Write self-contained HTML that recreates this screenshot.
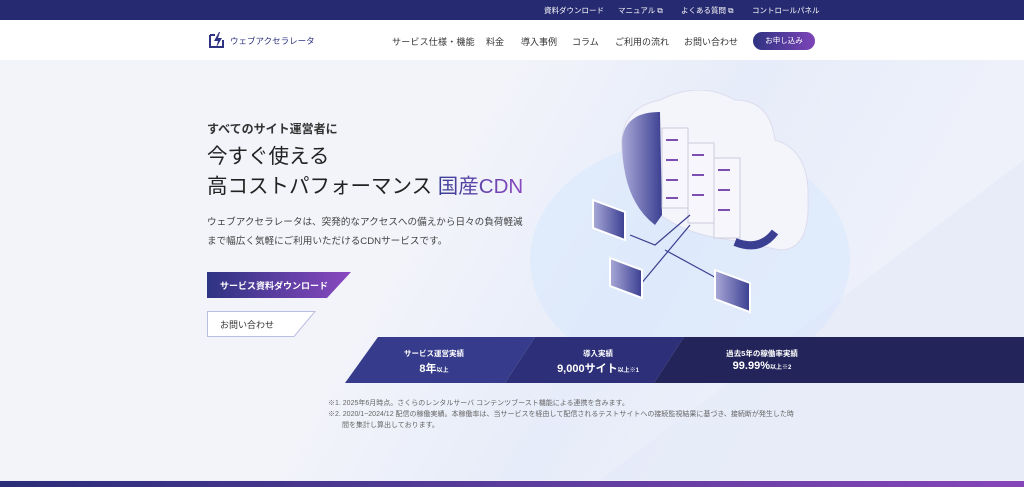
<!DOCTYPE html>
<html><head><meta charset="utf-8"><style>
*{margin:0;padding:0;box-sizing:border-box}
body{width:1024px;height:487px;overflow:hidden;font-family:"Liberation Sans","Noto Sans CJK JP",sans-serif;background:#eff1f9;position:relative;color:#222}
.top{position:absolute;top:0;left:0;width:1024px;height:20px;background:#262a70;color:#fff;font-size:7.5px}
.top span{position:absolute;top:5px}
.nav{position:absolute;top:20px;left:0;width:1024px;height:40px;background:#fff}
.nav .m{position:absolute;top:15px;font-size:9px;color:#333}
.btn1{position:absolute;left:753px;top:32px;width:62px;height:18px;border-radius:9px;background:linear-gradient(90deg,#2e3382,#7d44b8);color:#fff;font-size:7.5px;text-align:center;line-height:18px}
.hero{position:absolute;top:60px;left:0;width:1024px;height:420px;background:linear-gradient(120deg,#f3f4fa 40%,#e6ecf9 60%,#eef1fa 80%)}
.t{position:absolute;left:207px}
.st{position:absolute;color:#fff;text-align:center;font-weight:bold}
.foot{position:absolute;left:328px;font-size:7px;color:#666}
.bottom{position:absolute;left:0;top:481px;width:1024px;height:6px;background:linear-gradient(90deg,#2a2d78,#5a3c9c 50%,#8545b8)}
</style></head><body>
<div class="top"><span style="left:544px">資料ダウンロード</span><span style="left:618px">マニュアル ⧉</span><span style="left:681px">よくある質問 ⧉</span><span style="left:752px">コントロールパネル</span></div>
<div class="nav">
<svg style="position:absolute;left:208px;top:11px" width="18" height="18" viewBox="0 0 18 18"><path d="M2 4h5M2 4v12h13V9" stroke="#2e3382" stroke-width="2" fill="none"/><path d="M11 1L6 10h4l-2 7 6-10h-4l2-6z" fill="#2e3382"/></svg>
<span class="m" style="left:230px;font-size:8.5px;color:#2e3382">ウェブアクセラレータ</span>
<span class="m" style="left:392px;letter-spacing:.2px">サービス仕様・機能</span><span class="m" style="left:486px">料金</span><span class="m" style="left:521px">導入事例</span><span class="m" style="left:572px">コラム</span><span class="m" style="left:615px">ご利用の流れ</span><span class="m" style="left:684px">お問い合わせ</span>
</div>
<div class="btn1">お申し込み</div>
<div class="hero">
<svg style="position:absolute;left:0;top:0" width="1024" height="420"><polygon points="600,420 1024,100 1024,420" fill="#e4eaf8" opacity=".6"/><ellipse cx="690" cy="200" rx="160" ry="120" fill="#d9e8fb" opacity=".6"/></svg>
<svg style="position:absolute;left:570px;top:30px" width="240" height="230" viewBox="560 90 240 230">
<defs><linearGradient id="g" x1="0" x2="1"><stop offset="0" stop-color="#a9a9d8"/><stop offset="1" stop-color="#3b3f91"/></linearGradient></defs>
<path d="M615 170 Q600 110 650 100 Q690 80 725 100 Q760 100 765 140 Q800 150 798 200 Q800 250 770 250 L720 240 Q640 230 615 170Z" fill="#f4f4fb" stroke="#dcdcee"/>
<path d="M612 140 Q615 112 650 112 L652 215 L645 225 Q612 200 612 140Z" fill="url(#g)"/>
<g fill="#f6f6fc" stroke="#ccd"><rect x="652" y="128" width="26" height="80"/><rect x="678" y="143" width="26" height="80"/><rect x="704" y="158" width="26" height="80"/></g>
<g stroke="#7a4fb0" stroke-width="2"><path d="M656 140h12M656 160h12M656 180h12M656 198h12M682 155h12M682 175h12M682 195h12M708 170h12M708 190h12M708 210h12"/></g>
<path d="M725 242 Q750 252 765 232" fill="none" stroke="#3b3f91" stroke-width="8"/>
<g stroke="#3b3f91" stroke-width="1.2" fill="none"><path d="M620 235 L645 245 L680 215M630 285 L680 225M655 250 L710 280"/></g>
<g fill="url(#g)" stroke="#fff" stroke-width="2"><path d="M583 200 L615 212 L615 240 L583 228Z"/><path d="M600 258 L632 270 L632 298 L600 286Z"/><path d="M705 270 L740 283 L740 312 L705 299Z"/></g>
</svg>
<div class="t" style="top:60px;font-size:12px;font-weight:bold;color:#333">すべてのサイト運営者に</div>
<div class="t" style="top:82px;font-size:20.5px;color:#222;line-height:30px">今すぐ使える<br>高コストパフォーマンス <span style="background:linear-gradient(90deg,#3a3f96,#8a49c0);-webkit-background-clip:text;color:transparent">国産CDN</span></div>
<div class="t" style="top:153px;font-size:9.6px;color:#444;line-height:19px">ウェブアクセラレータは、突発的なアクセスへの備えから日々の負荷軽減<br>まで幅広く気軽にご利用いただけるCDNサービスです。</div>
<svg style="position:absolute;left:207px;top:212px" width="145" height="26"><defs><linearGradient id="b" x1="0" x2="1"><stop offset="0" stop-color="#2e3382"/><stop offset="1" stop-color="#8a49c0"/></linearGradient></defs><polygon points="0,0 144,0 120,26 0,26" fill="url(#b)"/><text x="13" y="17" fill="#fff" font-size="9" font-weight="bold" font-family="Liberation Sans,Noto Sans CJK JP,sans-serif">サービス資料ダウンロード</text></svg>
<svg style="position:absolute;left:207px;top:251px" width="110" height="26"><polygon points="0.5,0.5 108,0.5 87,25.5 0.5,25.5" fill="#fff" stroke="#b9bde0"/><text x="13" y="17" fill="#333" font-size="9" font-family="Liberation Sans,Noto Sans CJK JP,sans-serif">お問い合わせ</text></svg>
</div>
<svg style="position:absolute;left:0;top:337px" width="1024" height="46"><polygon points="378,0 535,0 505,46 345,46" fill="#363b8c"/><polygon points="535,0 684,0 654,46 505,46" fill="#2d3079"/><polygon points="684,0 1024,0 1024,46 654,46" fill="#22245a"/></svg>
<div class="st" style="left:384px;width:100px;top:348px;font-size:7.5px">サービス運営実績</div>
<div class="st" style="left:384px;width:100px;top:360px;font-size:11px">8年<small style="font-size:6px">以上</small></div>
<div class="st" style="left:543px;width:110px;top:348px;font-size:7.5px">導入実績</div>
<div class="st" style="left:543px;width:110px;top:360px;font-size:11px">9,000サイト<small style="font-size:6px">以上※1</small></div>
<div class="st" style="left:702px;width:120px;top:348px;font-size:7.5px">過去5年の稼働率実績</div>
<div class="st" style="left:702px;width:120px;top:360px;font-size:11px">99.99%<small style="font-size:6px">以上※2</small></div>
<div class="foot" style="top:398px">※1. 2025年6月時点。さくらのレンタルサーバ コンテンツブースト機能による連携を含みます。</div>
<div class="foot" style="top:409px">※2. 2020/1~2024/12 配信の稼働実績。本稼働率は、当サービスを経由して配信されるテストサイトへの接続監視結果に基づき、接続断が発生した時</div>
<div class="foot" style="top:420px;left:342px">間を集計し算出しております。</div>
<div class="bottom"></div>
</body></html>
